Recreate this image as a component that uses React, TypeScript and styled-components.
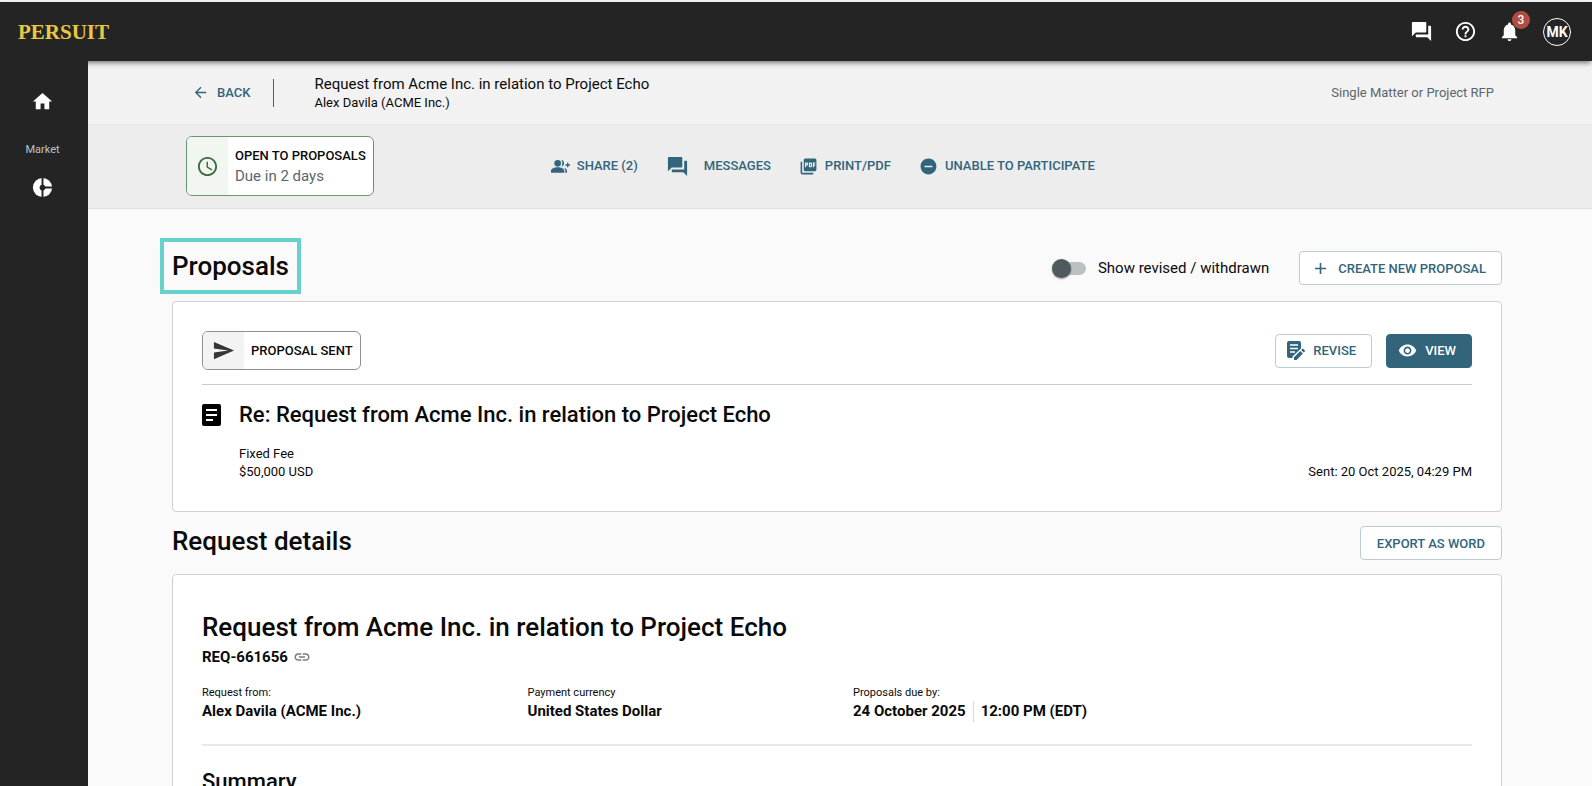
import React from "react";
import styled, { createGlobalStyle } from "styled-components";
import {
  MdAccessTime,
  MdAdd,
  MdArrowBack,
  MdHelpOutline,
  MdHome,
  MdLink,
  MdNotifications,
  MdPictureAsPdf,
  MdQuestionAnswer,
  MdRemoveCircle,
  MdSend,
  MdVisibility,
} from "react-icons/md";

const teal = "#32657c";
const ink = "#242424";
const grey = "#5b666c";

const GlobalStyle = createGlobalStyle`
  *, *::before, *::after { box-sizing: border-box; }
  body {
    margin: 0;
    background: #fafafa;
    color: #0a0a0a;
    font-family: Roboto, "Liberation Sans", sans-serif;
  }
  h1, h2, h3, p, dl, dt, dd { margin: 0; }
  button { font-family: inherit; cursor: pointer; }
  a { color: inherit; text-decoration: none; }
  svg { display: block; flex: none; }
`;

const Shell = styled.div`
  display: flex;
  flex-direction: column;
  height: 100vh;
  border-top: 2px solid #f1f3f4;
`;

const TopBar = styled.header`
  display: flex;
  align-items: center;
  justify-content: space-between;
  flex: none;
  height: 59px;
  padding: 0 21px 0 18px;
  background: ${ink};
  color: #fff;
  box-shadow: 0 3px 5px -1px rgba(0, 0, 0, 0.5);
  z-index: 1;
`;

const Logo = styled.a`
  && { color: #e8c843; }
  font-family: "Liberation Serif", serif;
  font-size: 21px;
  font-weight: 700;
  line-height: 24px;
`;

const Tools = styled.div`
  display: flex;
  align-items: center;
  gap: 21px;
`;

const IconButton = styled.button`
  position: relative;
  display: flex;
  padding: 0;
  border: 0;
  background: none;
  color: inherit;
  font-size: 23px;
`;

const Badge = styled.span`
  position: absolute;
  top: -9px;
  right: -9px;
  width: 18px;
  height: 18px;
  border-radius: 50%;
  background: #b34c41;
  font-size: 12px;
  font-weight: 500;
  line-height: 18px;
  text-align: center;
`;

const Avatar = styled.button`
  width: 28px;
  height: 28px;
  margin-left: 1px;
  padding: 0;
  border: 1px solid #fff;
  border-radius: 50%;
  background: none;
  color: #fff;
  display: flex;
  align-items: center;
  justify-content: center;
  font-size: 14px;
  font-weight: 700;
`;

const Body = styled.div`
  display: flex;
  flex: 1;
  min-height: 0;
`;

const Sidebar = styled.nav`
  display: flex;
  flex-direction: column;
  align-items: center;
  flex: none;
  width: 88px;
  padding: 29px 3px 0 0;
  background: ${ink};
  color: #fff;
  z-index: 2;
`;

const NavLink = styled.a`
  font-size: 23px;
`;

const NavLabel = styled.span`
  margin: 29px 0 18px;
  color: #bfc2c8;
  font-size: 11px;
  line-height: 16px;
`;

const Main = styled.main`
  flex: 1;
  min-width: 0;
  overflow-y: auto;
  scrollbar-width: none;
`;

const RequestBar = styled.div`
  display: flex;
  align-items: center;
  height: 64px;
  padding: 0 98px 0 104px;
  border-bottom: 1px solid #e6e6e6;
  background: #f2f2f2;
`;

const BackLink = styled.a`
  display: flex;
  align-items: center;
  gap: 8px;
  padding-right: 23px;
  && { color: ${teal}; }
  font-size: 13px;
  font-weight: 500;
  line-height: 28px;
  border-right: 1px solid #5c5c5c;

  svg { font-size: 17px; }
`;

const RequestName = styled.div`
  flex: 1;
  padding-left: 40px;
  font-size: 15px;
  line-height: 20px;
`;

const RequestOwner = styled.p`
  font-size: 13px;
  line-height: 18px;
`;

const RequestKind = styled.span`
  color: ${grey};
  font-size: 13px;
`;

const ActionBar = styled.div`
  display: flex;
  align-items: center;
  gap: 177px;
  height: 84px;
  padding: 0 0 1px 98px;
  border-bottom: 1px solid #e0e0e0;
  background: #ededed;
`;

const Status = styled.div<{ $tone: "green" | "grey" }>`
  display: flex;
  flex: none;
  overflow: hidden;
  border: 1px solid ${(p) => (p.$tone === "green" ? "#6b966d" : "#8f8f8f")};
  border-radius: 6px;
  background: #fff;
`;

const StatusIcon = styled.div<{ $tone: "green" | "grey" }>`
  display: flex;
  align-items: center;
  justify-content: center;
  width: 41px;
  background: ${(p) => (p.$tone === "green" ? "#f1f6f1" : "#f3f3f3")};
  color: ${(p) => (p.$tone === "green" ? "#3f6b41" : "#36363a")};
  font-size: 23px;
`;

const StatusText = styled.div`
  padding: 8px 7px;
  font-size: 13px;
  font-weight: 500;
  line-height: 21px;
`;

const StatusNote = styled.p`
  color: ${grey};
  font-size: 15px;
  font-weight: 400;
`;

const Actions = styled.div`
  display: flex;
  align-items: center;
  gap: 28px;
`;

const ActionButton = styled.button<{ $wide?: boolean }>`
  display: flex;
  align-items: center;
  gap: ${(p) => (p.$wide ? "15px" : "7px")};
  padding: 0;
  border: 0;
  background: none;
  color: ${teal};
  font-size: 13px;
  font-weight: 500;
  line-height: 20px;
`;

const ActionIcon = styled.span<{ $large?: boolean }>`
  font-size: ${(p) => (p.$large ? "23px" : "19px")};
`;

const Content = styled.div`
  padding: 41px 90px 40px 84px;
`;

const SectionHead = styled.div`
  display: flex;
  align-items: flex-end;
  justify-content: space-between;
  height: 35px;
`;

const SectionTitle = styled.h2<{ $marked?: boolean }>`
  align-self: flex-start;
  font-size: 26px;
  font-weight: 500;
  line-height: 32px;
  outline: ${(p) => (p.$marked ? "4px solid #69d1cb" : "none")};
  outline-offset: 8px;
`;

const Controls = styled.div`
  display: flex;
  align-items: center;
  gap: 30px;
`;

const SwitchLabel = styled.label`
  display: flex;
  align-items: center;
  gap: 12px;
  font-size: 15px;
`;

const Switch = styled.input`
  appearance: none;
  display: flex;
  align-items: center;
  width: 32px;
  height: 13px;
  margin: 0;
  border-radius: 7px;
  background: #bbc1c3;

  &::before {
    content: "";
    width: 19px;
    height: 19px;
    margin-left: -2px;
    border-radius: 50%;
    background: #4f5a60;
    box-shadow: 0 1px 2px rgba(0, 0, 0, 0.4);
  }
  &:checked { justify-content: flex-end; }
`;

const Button = styled.button<{ $filled?: boolean }>`
  display: flex;
  align-items: center;
  gap: 8px;
  height: 34px;
  padding: 0 15px 0 11px;
  border: 1px solid ${(p) => (p.$filled ? teal : "#bccdd5")};
  border-radius: 4px;
  background: ${(p) => (p.$filled ? teal : "#fff")};
  color: ${(p) => (p.$filled ? "#fff" : teal)};
  font-size: 13px;
  font-weight: 500;
`;

const ButtonIcon = styled.span`
  font-size: 19px;
`;

const TextButton = styled(Button)`
  padding: 0 16px;
`;

const Card = styled.section`
  margin: 16px 0 13px;
  padding: 29px 29px 30px;
  border: 1px solid #cfd0d4;
  border-radius: 4px;
  background: #fff;
`;

const CardHead = styled.div`
  display: flex;
  align-items: center;
  justify-content: space-between;
  padding-bottom: 14px;
  border-bottom: 1px solid #cbcbcf;
`;

const ButtonRow = styled.div`
  display: flex;
  gap: 14px;
`;

const ProposalTitle = styled.h3`
  display: flex;
  align-items: center;
  gap: 18px;
  padding: 16px 0;
  font-size: 22px;
  font-weight: 500;
  line-height: 28px;
`;

const ProposalMeta = styled.div`
  display: flex;
  align-items: flex-end;
  justify-content: space-between;
  padding-left: 37px;
  font-size: 13px;
  line-height: 18px;
`;

const RequestCard = styled(Card)`
  margin-top: 14px;
  padding-top: 36px;
`;

const Reference = styled.div`
  display: flex;
  align-items: center;
  gap: 5px;
  font-size: 15px;
  font-weight: 700;
  line-height: 28px;

  svg { color: #7a7a86; font-size: 18px; }
`;

const Facts = styled.dl`
  display: grid;
  grid-template-columns: repeat(4, 1fr);
  gap: 32px;
  margin-top: 14px;
  padding-bottom: 22px;
  border-bottom: 2px solid #e8e8e8;
`;

const FactLabel = styled.dt`
  font-size: 11px;
  line-height: 16px;
`;

const FactValue = styled.dd`
  display: flex;
  gap: 7px;
  font-size: 15px;
  font-weight: 700;
  line-height: 21px;
`;

const FactPart = styled.span`
  & + & {
    padding-left: 7px;
    border-left: 1px solid #d9d9d9;
  }
`;

const SummaryTitle = styled.h3`
  margin-top: 22px;
  font-size: 22px;
  font-weight: 500;
  line-height: 28px;
`;

const SegmentsIcon = () => (
  <svg width="23" height="23" viewBox="0 0 24 24" aria-hidden="true">
    <circle cx="12" cy="12" r="10" fill="#fff" />
    <path d="M12 2v20M12 12h10" stroke={ink} strokeWidth="2" />
    <circle cx="12" cy="12" r="3" fill={ink} />
  </svg>
);

const ShareIcon = () => (
  <svg width="19" height="13" viewBox="0 0 57 39" fill="currentColor" aria-hidden="true">
    <circle cx="20" cy="10" r="10" />
    <path d="M0 38v-5c0-7 10-11 20-11s20 4 20 11v5z" />
    <path d="M31 0c10 1 12 17 0 20 4-6 4-14 0-20z" />
    <path d="M39 23c6 2 9 5 9 10v5h-5v-5c0-4-1-7-4-10z" />
    <path d="M48 8h4v5h5v4h-5v5h-4v-5h-5v-4h5z" />
  </svg>
);

const ArticleIcon = () => (
  <svg width="19" height="22" viewBox="0 0 19 22" aria-hidden="true">
    <rect width="19" height="22" rx="2" fill="#000" />
    <path d="M4 6h11M4 11h11M4 16h7" stroke="#fff" strokeWidth="2" />
  </svg>
);

const ReviseIcon = () => (
  <svg width="18" height="19" viewBox="0 0 18 19" aria-hidden="true">
    <path
      fill="currentColor"
      d="M2 0h10a2 2 0 0 1 2 2v5.400L5.500 15.500V17H2a2 2 0 0 1-2-2V2a2 2 0 0 1 2-2z"
    />
    <path d="M3 4h8M3 7.500h8M3 11h5" stroke="#fff" strokeWidth="1.500" />
    <path
      fill="currentColor"
      d="M7 16.300l6.300-6.300 2.600 2.600L9.600 19H7zM14.200 9.100l1-1c.4-.4.900-.4 1.300 0l1.200 1.200c.4.4.4.900 0 1.300l-1 1z"
    />
  </svg>
);

export default function App() {
  return (
    <>
      <GlobalStyle />
      <Shell>
        <TopBar>
          <Logo href="#">PERSUIT</Logo>
          <Tools>
            <IconButton aria-label="Messages"><MdQuestionAnswer /></IconButton>
            <IconButton aria-label="Help"><MdHelpOutline /></IconButton>
            <IconButton aria-label="Notifications">
              <MdNotifications />
              <Badge>3</Badge>
            </IconButton>
            <Avatar>MK</Avatar>
          </Tools>
        </TopBar>
        <Body>
          <Sidebar>
            <NavLink href="#" aria-label="Home"><MdHome /></NavLink>
            <NavLabel>Market</NavLabel>
            <NavLink href="#" aria-label="Market insights"><SegmentsIcon /></NavLink>
          </Sidebar>
          <Main>
            <RequestBar>
              <BackLink href="#"><MdArrowBack />BACK</BackLink>
              <RequestName>
                Request from Acme Inc. in relation to Project Echo
                <RequestOwner>Alex Davila (ACME Inc.)</RequestOwner>
              </RequestName>
              <RequestKind>Single Matter or Project RFP</RequestKind>
            </RequestBar>
            <ActionBar>
              <Status $tone="green">
                <StatusIcon $tone="green"><MdAccessTime /></StatusIcon>
                <StatusText>
                  OPEN TO PROPOSALS
                  <StatusNote>Due in 2 days</StatusNote>
                </StatusText>
              </Status>
              <Actions>
                <ActionButton><ActionIcon><ShareIcon /></ActionIcon>SHARE (2)</ActionButton>
                <ActionButton $wide>
                  <ActionIcon $large><MdQuestionAnswer /></ActionIcon>MESSAGES
                </ActionButton>
                <ActionButton><ActionIcon><MdPictureAsPdf /></ActionIcon>PRINT/PDF</ActionButton>
                <ActionButton>
                  <ActionIcon><MdRemoveCircle /></ActionIcon>UNABLE TO PARTICIPATE
                </ActionButton>
              </Actions>
            </ActionBar>
            <Content>
              <SectionHead>
                <SectionTitle $marked>Proposals</SectionTitle>
                <Controls>
                  <SwitchLabel>
                    <Switch type="checkbox" />
                    Show revised / withdrawn
                  </SwitchLabel>
                  <Button><ButtonIcon><MdAdd /></ButtonIcon>CREATE NEW PROPOSAL</Button>
                </Controls>
              </SectionHead>
              <Card>
                <CardHead>
                  <Status $tone="grey">
                    <StatusIcon $tone="grey"><MdSend /></StatusIcon>
                    <StatusText>PROPOSAL SENT</StatusText>
                  </Status>
                  <ButtonRow>
                    <Button><ButtonIcon><ReviseIcon /></ButtonIcon>REVISE</Button>
                    <Button $filled><ButtonIcon><MdVisibility /></ButtonIcon>VIEW</Button>
                  </ButtonRow>
                </CardHead>
                <ProposalTitle>
                  <ArticleIcon />
                  Re: Request from Acme Inc. in relation to Project Echo
                </ProposalTitle>
                <ProposalMeta>
                  <div>
                    <p>Fixed Fee</p>
                    <p>$50,000 USD</p>
                  </div>
                  <p>Sent: 20 Oct 2025, 04:29 PM</p>
                </ProposalMeta>
              </Card>
              <SectionHead>
                <SectionTitle>Request details</SectionTitle>
                <TextButton>EXPORT AS WORD</TextButton>
              </SectionHead>
              <RequestCard>
                <SectionTitle>Request from Acme Inc. in relation to Project Echo</SectionTitle>
                <Reference>REQ-661656 <MdLink /></Reference>
                <Facts>
                  <div>
                    <FactLabel>Request from:</FactLabel>
                    <FactValue>Alex Davila (ACME Inc.)</FactValue>
                  </div>
                  <div>
                    <FactLabel>Payment currency</FactLabel>
                    <FactValue>United States Dollar</FactValue>
                  </div>
                  <div>
                    <FactLabel>Proposals due by:</FactLabel>
                    <FactValue>
                      <FactPart>24 October 2025</FactPart>
                      <FactPart>12:00 PM (EDT)</FactPart>
                    </FactValue>
                  </div>
                </Facts>
                <SummaryTitle>Summary</SummaryTitle>
              </RequestCard>
            </Content>
          </Main>
        </Body>
      </Shell>
    </>
  );
}
